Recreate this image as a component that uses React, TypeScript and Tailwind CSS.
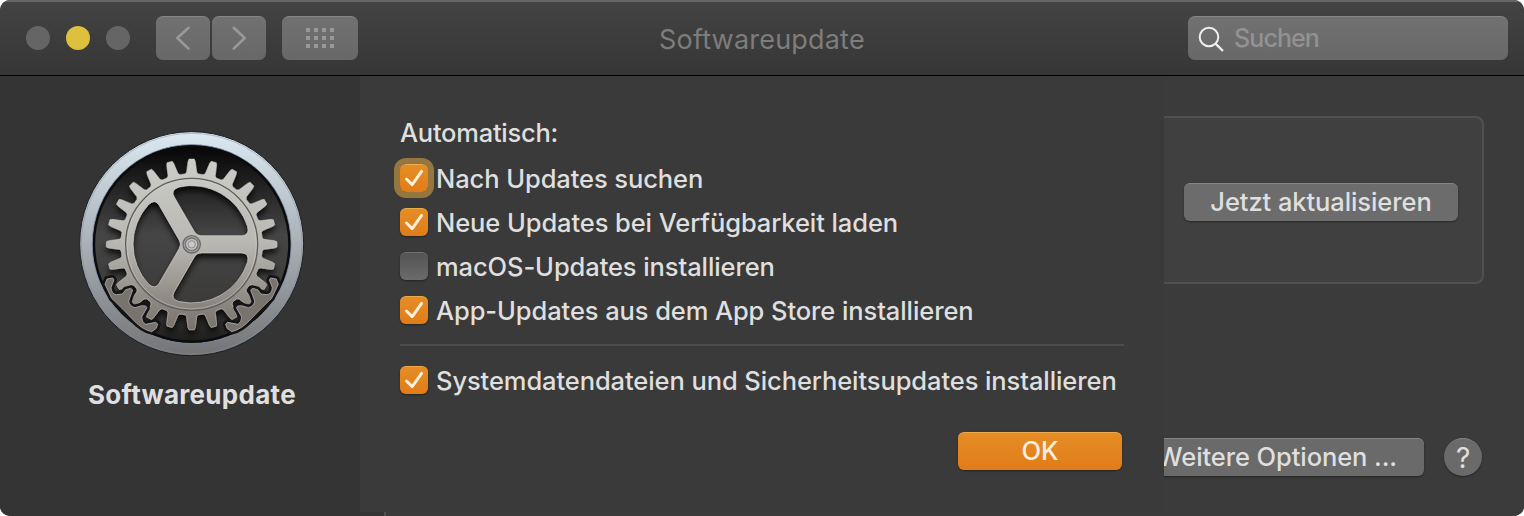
import type { ReactNode } from "react";

const HOLE =
  "M30,-26 L150,-26 Q174,-26 168,-52 A176,176 0 0 0 -39,-171.6 Q-64,-163 -52.5,-142.9 L7.5,-39 Q15,-26 30,-26Z";
const RACK =
  "M-260,120 L-254,104 L-237,101 L-233,107 L-242,130 Q-240,149 -226,151 L-208,149 L-198,136 L-183,132 L-177,137 L-189,170 Q-187,186 -170,190 L-150,184 L-138,185 L-134,190 L-150,218 Q-150,232 -139,240 L-108,234 L-102,239 L-106,252 L-120,262 Q-150,256 -180,222 Q-210,190 -240,162 Z";

// tooth profile as [degrees from its centre, radius]
const TOOTH = [
  [-5.4, 212],
  [-4, 217],
  [-2.5, 249],
  [-1.8, 256],
  [1.8, 256],
  [2.5, 249],
  [4, 217],
  [5.4, 212]
];

function gearOutline(teeth: number) {
  const points: string[] = [];
  for (let i = 0; i < teeth; i++) {
    for (const [offset, radius] of TOOTH) {
      const angle = (((i * 360) / teeth + offset - 90) * Math.PI) / 180;
      points.push(`${(Math.cos(angle) * radius).toFixed(1)},${(Math.sin(angle) * radius).toFixed(1)}`);
    }
  }
  return `M${points.join(" L")}Z`;
}

const GEAR = gearOutline(24);

export default function App() {
  return (
    <div className="h-[516px] w-[1524px] bg-white font-['Inter',sans-serif] text-[25.5px] font-[450] tracking-[-0.09px] text-[#dfdfdf]">
      <div className="flex h-full flex-col overflow-hidden rounded-[10px] bg-[#3a3a3a]">
        <Toolbar />
        <div className="relative flex min-h-0 flex-1">
          <aside className="flex w-[386px] shrink-0 flex-col items-center border-r-2 border-[#505050] bg-[#343434] pt-[49px]">
            <GearIcon />
            <h2 className="mt-[13px] text-[26px] leading-[34px] font-bold tracking-[0.3px]">Softwareupdate</h2>
          </aside>
          <Background />
          <Sheet />
        </div>
      </div>
    </div>
  );
}

function Toolbar() {
  return (
    <header className="flex h-[76px] shrink-0 items-start border-t-2 border-b border-t-[#666] border-b-black bg-linear-to-b from-[#434343] to-[#363636]">
      <div className="mt-6 ml-[26px] flex gap-4">
        <span className="size-6 rounded-full bg-[#656565]" />
        <span className="size-6 rounded-full bg-[#dec03e]" />
        <span className="size-6 rounded-full bg-[#656565]" />
      </div>
      <div className="mt-[14px] ml-[26px] flex gap-[2px]">
        <ToolButton>
          <path d="M32.5 11.8 L21.3 22 L32.5 32.6" />
        </ToolButton>
        <ToolButton>
          <path d="M21.7 11.8 L32.7 22 L21.7 32.6" />
        </ToolButton>
      </div>
      <div className="mt-[14px] ml-4 flex h-11 w-[76px] items-center justify-center rounded-[7px] border-t border-[#858585] bg-linear-to-b from-[#717171] to-[#686868] pb-px">
        <div className="grid grid-cols-4 gap-1">
          {Array.from({ length: 12 }, (_, i) => (
            <span key={i} className="size-1 bg-[#999]" />
          ))}
        </div>
      </div>
      <h1 className="mt-[21px] ml-[301px] w-[208px] text-[27px] leading-[34px] font-normal tracking-[0.2px] whitespace-nowrap text-[#7d7d7d]">
        Softwareupdate
      </h1>
      <div className="mt-[14px] mr-4 ml-auto flex h-11 w-80 items-center rounded-[7px] border-t border-[#858585] bg-linear-to-b from-[#717171] to-[#686868] pl-[10px] text-[#929292]">
        <svg className="size-7" viewBox="0 0 28 28" fill="none" stroke="#efefef" strokeWidth="2">
          <circle cx="11" cy="12" r="9.3" />
          <path d="M17.5 18.7 L25 26" strokeWidth="2.4" />
        </svg>
        <span className="ml-2 text-[25px] tracking-[-0.9px]">Suchen</span>
      </div>
    </header>
  );
}

function ToolButton({ children }: Readonly<{ children: ReactNode }>) {
  return (
    <div className="h-11 w-[54px] rounded-[7px] border-t border-[#858585] bg-linear-to-b from-[#717171] to-[#686868]">
      <svg
        className="-mt-px h-11 w-[54px]"
        viewBox="0 0 54 44"
        fill="none"
        stroke="#999"
        strokeWidth="2.6"
        strokeLinecap="round"
        strokeLinejoin="round"
      >
        {children}
      </svg>
    </div>
  );
}

function Sheet() {
  return (
    <main className="absolute top-0 left-[360px] h-[436px] w-[804px] bg-[#3a3a3a] px-10 pt-10">
      <p className="h-[34px] leading-[34px] tracking-[-0.25px]">Automatisch:</p>
      <div className="mt-3 flex flex-col gap-3">
        <CheckRow checked focused label="Nach Updates suchen" />
        <CheckRow checked label="Neue Updates bei Verfügbarkeit laden" />
        <CheckRow label="macOS-Updates installieren" />
        <CheckRow checked label="App-Updates aus dem App Store installieren" />
      </div>
      <hr className="mt-[18px] mb-[18px] border-t-2 border-[#4d4d4d]" />
      <CheckRow checked label="Systemdatendateien und Sicherheitsupdates installieren" />
      <button className="mt-[36px] mr-[2px] ml-auto flex h-[38px] w-[164px] items-center justify-center rounded-md border-t border-[#efab4b] bg-linear-to-b from-[#e68d24] to-[#e07c19] text-[#fbefe0] shadow-[0_1px_2px_rgba(0,0,0,0.4)]">
        OK
      </button>
    </main>
  );
}

function CheckRow({
  label,
  checked = false,
  focused = false
}: Readonly<{
  label: string;
  checked?: boolean;
  focused?: boolean;
}>) {
  return (
    <label className="flex h-8 items-center gap-2">
      <span
        className={`size-7 shrink-0 rounded-md border-t ${
          checked
            ? "border-[#efab4b] bg-linear-to-b from-[#e68d24] to-[#e07c19]"
            : "border-[#707070] bg-linear-to-b from-[#545454] to-[#6b6b6b]"
        } ${focused ? "shadow-[0_0_0_6px_#94763e]" : "shadow-[0_1px_2px_rgba(0,0,0,0.4)]"}`}
      >
        {checked && (
          <svg
            className="-mt-px size-7"
            viewBox="0 0 28 28"
            fill="none"
            stroke="#fdf1de"
            strokeWidth="2.9"
            strokeLinecap="round"
            strokeLinejoin="round"
          >
            <path d="M6.5 15 L12.2 20.6 L21.6 7.4" />
          </svg>
        )}
      </span>
      <span className="pt-[3px] whitespace-nowrap">{label}</span>
    </label>
  );
}

function Background() {
  return (
    <section className="flex flex-1 flex-col bg-[#3b3b3b] px-10 pt-10">
      <div className="flex h-[168px] items-start justify-end rounded-lg border-2 border-[#505050] bg-[#404040] pt-[65px] pr-6">
        <button className="flex h-[38px] w-[274px] items-center justify-center rounded-md border-t border-[#858585] bg-[#6c6c6c] whitespace-nowrap shadow-[0_1px_2px_rgba(0,0,0,0.4)]">
          Jetzt aktualisieren
        </button>
      </div>
      <div className="mt-[154px] mr-[2px] flex items-center justify-end gap-5">
        <button className="flex h-[38px] items-center rounded-md border-t border-[#858585] bg-[#6a6a6a] px-[27px] whitespace-nowrap shadow-[0_1px_2px_rgba(0,0,0,0.4)]">
          Weitere Optionen ...
        </button>
        <button className="flex size-[38px] items-center justify-center rounded-full border-t border-[#858585] bg-[#6a6a6a] text-[28px] font-normal shadow-[0_1px_2px_rgba(0,0,0,0.4)]">
          ?
        </button>
      </div>
    </section>
  );
}

function GearIcon() {
  return (
    <svg className="size-60 shrink-0" viewBox="0 0 720 720">
      <defs>
        <linearGradient id="rim" x1="0" y1="0" x2="0" y2="1">
          <stop offset="0" stopColor="#dce9f0" />
          <stop offset="0.5" stopColor="#a9b0b6" />
          <stop offset="1" stopColor="#747475" />
        </linearGradient>
        <linearGradient id="well" x1="0" y1="0" x2="0" y2="1">
          <stop offset="0" stopColor="#050505" />
          <stop offset="0.45" stopColor="#454545" />
          <stop offset="0.8" stopColor="#3c3b3a" />
          <stop offset="1" stopColor="#1c1b1a" />
        </linearGradient>
        <linearGradient id="metal" gradientUnits="userSpaceOnUse" x1="0" y1="-258" x2="0" y2="258">
          <stop offset="0" stopColor="#cccdc9" />
          <stop offset="0.5" stopColor="#b9b7b2" />
          <stop offset="1" stopColor="#777069" />
        </linearGradient>
        <filter id="drop" x="-10%" y="-10%" width="120%" height="125%">
          <feDropShadow dx="0" dy="14" stdDeviation="10" floodColor="#000" floodOpacity="0.8" />
        </filter>
        <mask id="spokes" maskUnits="userSpaceOnUse" x="-270" y="-270" width="540" height="540">
          <rect x="-270" y="-270" width="540" height="540" fill="#fff" />
          <path d={HOLE} />
          <path d={HOLE} transform="rotate(120)" />
          <path d={HOLE} transform="rotate(240)" />
        </mask>
      </defs>
      <circle cx="359" cy="356" r="336" fill="url(#rim)" stroke="#1d1f22" strokeWidth="3" />
      <circle cx="359" cy="356" r="331" fill="none" stroke="#7e8ca4" strokeOpacity="0.7" strokeWidth="2" />
      <circle cx="359" cy="357" r="298" fill="url(#well)" stroke="#7989a8" strokeWidth="3" />
      <circle cx="359" cy="357" r="293" fill="none" stroke="#0b0b0c" strokeWidth="7" />
      <g transform="translate(359 358)">
        <g filter="url(#drop)">
          <g mask="url(#spokes)">
            <path d={GEAR} fill="url(#metal)" stroke="#d5d6d3" strokeOpacity="0.7" strokeWidth="2" strokeLinejoin="round" />
            <circle r="198" fill="none" stroke="#5e5e5c" strokeWidth="4" />
            <circle r="194" fill="none" stroke="#d2d2ce" strokeOpacity="0.45" strokeWidth="3" />
          </g>
        </g>
        <g fill="none" stroke="#d7d7d5" strokeOpacity="0.7" strokeWidth="2.5">
          <path d={HOLE} />
          <path d={HOLE} transform="rotate(120)" />
          <path d={HOLE} transform="rotate(240)" />
        </g>
        <Rack />
        <g transform="scale(-1 1)">
          <Rack />
        </g>
        <circle r="26" fill="#a8a7a4" stroke="#68696c" strokeWidth="4" />
        <circle r="19" fill="#c5c4c1" stroke="#707276" strokeWidth="4" />
        <circle r="11" fill="#c9c8c6" stroke="#8a8a8c" strokeWidth="3" />
      </g>
    </svg>
  );
}

function Rack() {
  return (
    <>
      <path d={RACK} fill="#151413" stroke="#151413" strokeWidth="18" strokeLinejoin="round" />
      <path d={RACK} fill="#79736d" stroke="#c3c6cc" strokeOpacity="0.8" strokeWidth="2.5" strokeLinejoin="round" />
    </>
  );
}
